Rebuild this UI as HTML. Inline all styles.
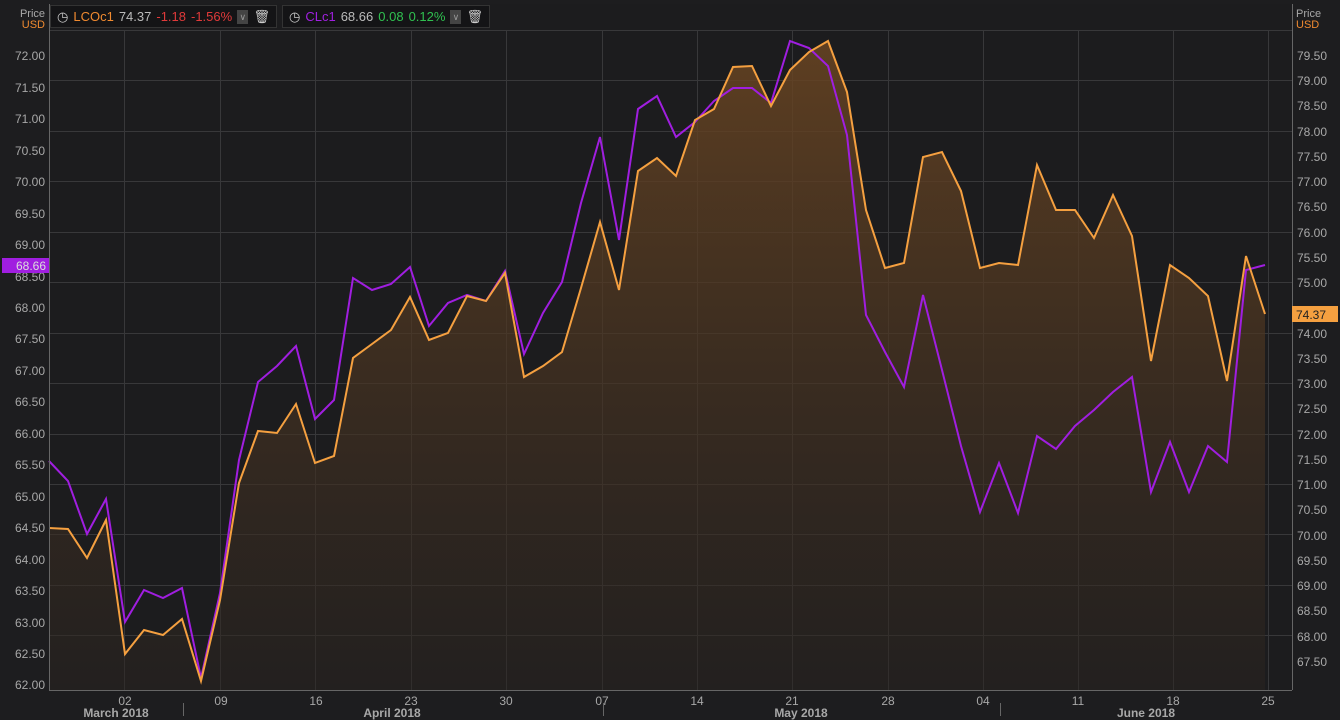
<!DOCTYPE html><html><head><meta charset="utf-8"><style>
body{margin:0;background:#1d1d1f;width:1340px;height:720px;overflow:hidden;font-family:"Liberation Sans",sans-serif}
.lg{position:absolute;top:5px;height:23px;background:#141416;border:1px solid #333;font-size:13px;color:#bbb;display:flex;align-items:center;gap:5px;padding:0 6px;box-sizing:border-box}
.dd{width:14px;height:14px;background:#444;display:inline-block;color:#999;font-size:9px;text-align:center;line-height:14px}
</style></head><body>
<svg width="1340" height="720" style="position:absolute;left:0;top:0" font-family="Liberation Sans, sans-serif">
<defs><linearGradient id="g" x1="0" y1="0" x2="0" y2="1"><stop offset="0" stop-color="#6a4522" stop-opacity=".85"/><stop offset="1" stop-color="#2a2420" stop-opacity=".5"/></linearGradient></defs>
<rect x="49" y="4" width="1243" height="686" fill="#1c1c1e"/>
<g stroke="#38383a" stroke-width="1">
<line x1="49" x2="1292" y1="30.5" y2="30.5"/><line x1="49" x2="1292" y1="80.5" y2="80.5"/><line x1="49" x2="1292" y1="131.5" y2="131.5"/><line x1="49" x2="1292" y1="181.5" y2="181.5"/><line x1="49" x2="1292" y1="232.5" y2="232.5"/><line x1="49" x2="1292" y1="282.5" y2="282.5"/><line x1="49" x2="1292" y1="333.5" y2="333.5"/><line x1="49" x2="1292" y1="383.5" y2="383.5"/><line x1="49" x2="1292" y1="434.5" y2="434.5"/><line x1="49" x2="1292" y1="484.5" y2="484.5"/><line x1="49" x2="1292" y1="534.5" y2="534.5"/><line x1="49" x2="1292" y1="585.5" y2="585.5"/><line x1="49" x2="1292" y1="635.5" y2="635.5"/>
<line y1="30" y2="690" x1="124.5" x2="124.5"/><line y1="30" y2="690" x1="220.5" x2="220.5"/><line y1="30" y2="690" x1="315.5" x2="315.5"/><line y1="30" y2="690" x1="411.5" x2="411.5"/><line y1="30" y2="690" x1="506.5" x2="506.5"/><line y1="30" y2="690" x1="602.5" x2="602.5"/><line y1="30" y2="690" x1="697.5" x2="697.5"/><line y1="30" y2="690" x1="792.5" x2="792.5"/><line y1="30" y2="690" x1="888.5" x2="888.5"/><line y1="30" y2="690" x1="983.5" x2="983.5"/><line y1="30" y2="690" x1="1078.5" x2="1078.5"/><line y1="30" y2="690" x1="1173.5" x2="1173.5"/><line y1="30" y2="690" x1="1268.5" x2="1268.5"/>
</g>
<polygon fill="url(#g)" points="49,690 49,528 68,529 87,558 106,520 125,654 144,630 163,635 182,619 201,681 220,600 239,483 258,431 277,433 296,404 315,463 334,456 353,358 372,344 391,330 410,297 429,340 448,333 467,296 486,301 505,273 524,377 543,366 562,352 581,288 600,222 619,290 638,171 657,158 676,176 695,120 714,109 733,67 752,66 771,106 790,70 809,52 828,41 847,92 866,210 885,268 904,263 923,157 942,152 961,191 980,268 999,263 1018,265 1037,165 1056,210 1075,210 1094,238 1113,195 1132,236 1151,361 1170,265 1189,278 1208,296 1227,381 1246,256 1265,314 1265,690"/>
<polyline fill="none" stroke="#a01ee0" stroke-width="2" points="49,461 68,481 87,534 106,499 125,622 144,590 163,598 182,588 201,678 220,593 239,460 258,382 277,366 296,346 315,419 334,400 353,278 372,290 391,284 410,267 429,326 448,303 467,295 486,301 505,271 524,354 543,313 562,282 581,203 600,137 619,240 638,109 657,96 676,137 695,122 714,101 733,88 752,88 771,103 790,41 809,48 828,66 847,135 866,315 885,352 904,387 923,295 942,370 961,446 980,512 999,463 1018,513 1037,436 1056,449 1075,426 1094,410 1113,392 1132,377 1151,492 1170,442 1189,492 1208,446 1227,462 1246,270 1265,265"/>
<polyline fill="none" stroke="#f5a040" stroke-width="2" points="49,528 68,529 87,558 106,520 125,654 144,630 163,635 182,619 201,681 220,600 239,483 258,431 277,433 296,404 315,463 334,456 353,358 372,344 391,330 410,297 429,340 448,333 467,296 486,301 505,273 524,377 543,366 562,352 581,288 600,222 619,290 638,171 657,158 676,176 695,120 714,109 733,67 752,66 771,106 790,70 809,52 828,41 847,92 866,210 885,268 904,263 923,157 942,152 961,191 980,268 999,263 1018,265 1037,165 1056,210 1075,210 1094,238 1113,195 1132,236 1151,361 1170,265 1189,278 1208,296 1227,381 1246,256 1265,314"/>
<g stroke="#666"><line x1="49.5" x2="49.5" y1="4" y2="690"/><line x1="1292.5" x2="1292.5" y1="4" y2="690"/><line x1="49" x2="1292" y1="690.5" y2="690.5"/>
<line x1="183.5" x2="183.5" y1="703" y2="716"/><line x1="603.5" x2="603.5" y1="703" y2="716"/><line x1="1000.5" x2="1000.5" y1="703" y2="716"/></g>
<g fill="#a8a8a8" font-size="12" text-anchor="end">
<text x="45" y="17" font-size="11">Price</text><text x="45" y="28" font-size="11" fill="#f08a30">USD</text>
<text x="45" y="60">72.00</text><text x="45" y="92">71.50</text><text x="45" y="123">71.00</text><text x="45" y="155">70.50</text><text x="45" y="186">70.00</text><text x="45" y="218">69.50</text><text x="45" y="249">69.00</text><text x="45" y="312">68.00</text><text x="45" y="343">67.50</text><text x="45" y="375">67.00</text><text x="45" y="406">66.50</text><text x="45" y="438">66.00</text><text x="45" y="469">65.50</text><text x="45" y="501">65.00</text><text x="45" y="532">64.50</text><text x="45" y="564">64.00</text><text x="45" y="595">63.50</text><text x="45" y="627">63.00</text><text x="45" y="658">62.50</text><text x="45" y="689">62.00</text><text x="45" y="281">68.50</text>
</g>
<g fill="#a8a8a8" font-size="12">
<text x="1296" y="17" font-size="11">Price</text><text x="1296" y="28" font-size="11" fill="#f08a30">USD</text>
<text x="1297" y="60">79.50</text><text x="1297" y="85">79.00</text><text x="1297" y="110">78.50</text><text x="1297" y="136">78.00</text><text x="1297" y="161">77.50</text><text x="1297" y="186">77.00</text><text x="1297" y="211">76.50</text><text x="1297" y="237">76.00</text><text x="1297" y="262">75.50</text><text x="1297" y="287">75.00</text><text x="1297" y="338">74.00</text><text x="1297" y="363">73.50</text><text x="1297" y="388">73.00</text><text x="1297" y="413">72.50</text><text x="1297" y="439">72.00</text><text x="1297" y="464">71.50</text><text x="1297" y="489">71.00</text><text x="1297" y="514">70.50</text><text x="1297" y="540">70.00</text><text x="1297" y="565">69.50</text><text x="1297" y="590">69.00</text><text x="1297" y="615">68.50</text><text x="1297" y="641">68.00</text><text x="1297" y="666">67.50</text>
</g>
<rect x="2" y="258" width="47" height="15" fill="#a01ee0"/><text x="46" y="270" fill="#ddd" font-size="12" text-anchor="end">68.66</text>
<rect x="1292" y="306" width="46" height="16" fill="#f5a040"/><text x="1296" y="319" fill="#222" font-size="12">74.37</text>
<g fill="#a8a8a8" font-size="12" text-anchor="middle">
<text x="125" y="705">02</text><text x="221" y="705">09</text><text x="316" y="705">16</text><text x="411" y="705">23</text><text x="506" y="705">30</text><text x="602" y="705">07</text><text x="697" y="705">14</text><text x="792" y="705">21</text><text x="888" y="705">28</text><text x="983" y="705">04</text><text x="1078" y="705">11</text><text x="1173" y="705">18</text><text x="1268" y="705">25</text>
<text x="116" y="717" font-weight="bold">March 2018</text><text x="392" y="717" font-weight="bold">April 2018</text><text x="801" y="717" font-weight="bold">May 2018</text><text x="1146" y="717" font-weight="bold">June 2018</text>
</g>
</svg>
<div class="lg" style="left:50px;width:227px"><span style="color:#ccc">◷</span><span style="color:#f08a30">LCOc1</span><span>74.37</span><span style="color:#e03a3a">-1.18</span><span style="color:#e03a3a">-1.56%</span><span class="dd">∨</span><span style="color:#ccc">🗑</span></div>
<div class="lg" style="left:282px;width:208px"><span style="color:#ccc">◷</span><span style="color:#a020e0">CLc1</span><span>68.66</span><span style="color:#30c050">0.08</span><span style="color:#30c050">0.12%</span><span class="dd">∨</span><span style="color:#ccc">🗑</span></div>
</body></html>
